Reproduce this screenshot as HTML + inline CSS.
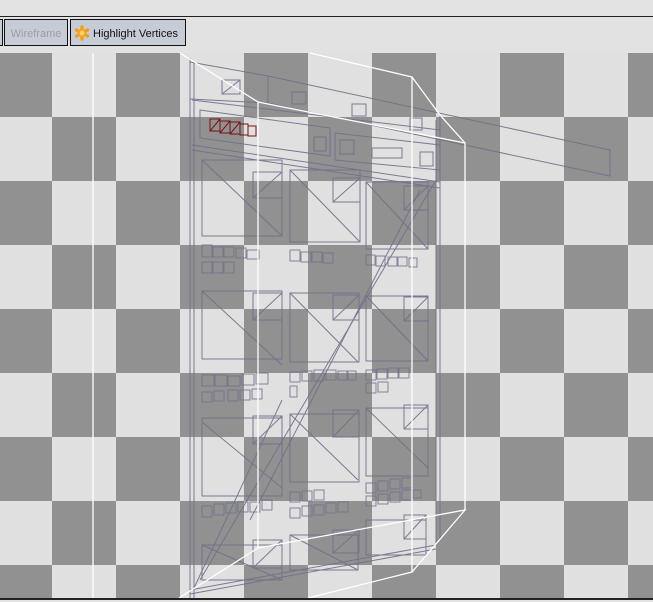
<!DOCTYPE html>
<html><head><meta charset="utf-8"><style>
html,body{margin:0;padding:0;width:653px;height:602px;overflow:hidden;background:#e2e2e2;font-family:"Liberation Sans",sans-serif}
.top{position:absolute;left:0;top:0;width:653px;height:16px;background:#e3e3e3;border-bottom:1px solid #222}
.btn{position:absolute;top:19px;height:27px;border:1px solid #111;background:#c6ccd6;font-size:11px;line-height:29px;box-sizing:border-box}
.view{position:absolute;left:0;top:53px;width:653px;height:545px;overflow:hidden;
background-color:#e0e0e0;
background-image:linear-gradient(45deg,#919191 25%,transparent 25%,transparent 75%,#919191 75%),linear-gradient(45deg,#919191 25%,transparent 25%,transparent 75%,#919191 75%);
background-size:128px 128px;background-position:-76px 0,-12px 64px}
.bot{position:absolute;left:0;top:598px;width:653px;height:4px;background:#e3e3e3;border-top:2px solid #222;box-sizing:border-box}
</style></head><body>
<div class="top"></div>
<div class="btn" style="left:-10px;width:13px;"></div>
<div class="btn" style="left:4px;width:64px;color:#9a9ea6;text-align:center;">Wireframe</div>
<div class="btn" style="left:70px;width:116px;color:#111;padding-left:22px;">Highlight Vertices
<svg style="position:absolute;left:3px;top:5px" width="16" height="16" viewBox="0 0 16 16"><g stroke="#f0a020" stroke-width="3.5" stroke-linecap="round"><line x1="8" y1="2" x2="8" y2="14"/><line x1="2.5" y1="5" x2="13.5" y2="11"/><line x1="2.5" y1="11" x2="13.5" y2="5"/></g><circle cx="8" cy="8" r="2.5" fill="#ffd060"/></svg></div>
<div class="view"></div>
<svg style="position:absolute;left:0;top:0" width="653" height="602" viewBox="0 0 653 602">
<g fill="none" stroke="#70708a" stroke-width="1" opacity="0.9">
<polyline points="190,58 190,598"/><polyline points="194,62 194,598"/>
<polyline points="440,115 440,540"/><polyline points="436,120 436,545"/>
<polygon points="190,62 268,76 268,103 190,99"/>
<polygon points="268,76 610,150 610,176 268,103"/>
<polygon points="200,110 330,128 330,156 200,138"/>
<polygon points="335,133 440,145 440,170 335,160"/>
<line x1="192" y1="145" x2="440" y2="182"/><line x1="192" y1="150" x2="440" y2="188"/>
<rect x="222" y="80" width="18" height="14"/><line x1="222" y1="94" x2="240" y2="80"/>
<rect x="292" y="92" width="14" height="12"/><rect x="352" y="104" width="14" height="12"/><rect x="410" y="118" width="12" height="12"/>
<line x1="192" y1="100" x2="440" y2="130"/>
<rect x="314" y="137" width="12" height="14"/><rect x="340" y="140" width="14" height="14"/><rect x="372" y="148" width="30" height="10"/><rect x="420" y="152" width="13" height="14"/>
<rect x="202" y="160" width="80" height="76"/><line x1="202" y1="160" x2="282" y2="236"/><rect x="253" y="172" width="29" height="26"/><line x1="253" y1="198" x2="282" y2="172"/>
<rect x="290" y="170" width="70" height="72"/><line x1="290" y1="170" x2="360" y2="242"/><rect x="333" y="178" width="27" height="24"/><line x1="333" y1="202" x2="360" y2="178"/>
<rect x="366" y="182" width="62" height="67"/><line x1="366" y1="182" x2="428" y2="249"/><rect x="404" y="186" width="24" height="24"/><line x1="404" y1="210" x2="428" y2="186"/>
<rect x="202" y="291" width="80" height="68"/><line x1="202" y1="291" x2="282" y2="365"/><rect x="253" y="293" width="29" height="27"/><line x1="253" y1="320" x2="282" y2="293"/>
<rect x="290" y="293" width="69" height="69"/><line x1="290" y1="293" x2="358" y2="362"/><rect x="333" y="295" width="26" height="25"/><line x1="333" y1="320" x2="359" y2="295"/>
<rect x="366" y="296" width="62" height="65"/><line x1="366" y1="296" x2="428" y2="361"/><rect x="404" y="297" width="24" height="24"/><line x1="404" y1="321" x2="428" y2="297"/>
<rect x="202" y="418" width="80" height="78"/><line x1="202" y1="422" x2="282" y2="488"/><rect x="253" y="416" width="29" height="28"/><line x1="253" y1="444" x2="282" y2="416"/>
<rect x="290" y="414" width="69" height="68"/><line x1="290" y1="414" x2="358" y2="480"/><rect x="333" y="410" width="26" height="27"/><line x1="333" y1="437" x2="359" y2="410"/>
<rect x="366" y="408" width="62" height="68"/><line x1="366" y1="408" x2="428" y2="468"/><rect x="404" y="405" width="24" height="24"/><line x1="404" y1="429" x2="428" y2="405"/>
<rect x="202" y="545" width="80" height="35"/><line x1="202" y1="545" x2="282" y2="580"/><rect x="253" y="540" width="29" height="28"/><line x1="253" y1="568" x2="282" y2="540"/>
<rect x="290" y="535" width="68" height="35"/><line x1="290" y1="535" x2="358" y2="570"/><rect x="333" y="530" width="26" height="23"/><line x1="333" y1="553" x2="359" y2="530"/>
<rect x="366" y="520" width="60" height="35"/><rect x="404" y="515" width="22" height="24"/><line x1="404" y1="539" x2="426" y2="515"/>
<line x1="190" y1="590" x2="436" y2="545"/><line x1="190" y1="594" x2="436" y2="549"/>
<line x1="194" y1="588" x2="282" y2="400"/><line x1="200" y1="580" x2="436" y2="180"/><line x1="250" y1="520" x2="420" y2="190"/>
<g stroke-width="0.9">
<rect x="202" y="245" width="10" height="12"/><rect x="213" y="247" width="10" height="10"/><rect x="224" y="247" width="10" height="10"/><rect x="236" y="248" width="10" height="10"/><rect x="247" y="250" width="12" height="9"/>
<rect x="202" y="262" width="10" height="11"/><rect x="213" y="262" width="10" height="11"/><rect x="224" y="262" width="10" height="11"/>
<rect x="290" y="250" width="10" height="11"/><rect x="301" y="252" width="10" height="10"/><rect x="312" y="252" width="10" height="10"/><rect x="323" y="253" width="10" height="10"/>
<rect x="366" y="255" width="9" height="10"/><rect x="376" y="256" width="9" height="10"/><rect x="388" y="257" width="9" height="9"/><rect x="398" y="257" width="9" height="9"/><rect x="409" y="258" width="8" height="9"/>
<rect x="202" y="375" width="12" height="11"/><rect x="215" y="375" width="12" height="11"/><rect x="228" y="376" width="12" height="10"/><rect x="242" y="374" width="12" height="11"/><rect x="256" y="373" width="12" height="11"/>
<rect x="202" y="392" width="10" height="10"/><rect x="214" y="391" width="10" height="10"/><rect x="228" y="390" width="10" height="11"/><rect x="240" y="390" width="10" height="10"/><rect x="252" y="389" width="10" height="10"/>
<rect x="290" y="372" width="10" height="10"/><rect x="302" y="371" width="10" height="10"/><rect x="314" y="370" width="10" height="11"/><rect x="326" y="370" width="10" height="10"/><rect x="338" y="371" width="9" height="9"/><rect x="348" y="371" width="8" height="9"/>
<rect x="290" y="386" width="7" height="11"/>
<rect x="366" y="370" width="10" height="10"/><rect x="377" y="369" width="10" height="10"/><rect x="388" y="368" width="10" height="10"/><rect x="399" y="368" width="10" height="10"/>
<rect x="366" y="383" width="10" height="10"/><rect x="378" y="382" width="10" height="10"/>
<rect x="202" y="506" width="10" height="11"/><rect x="214" y="504" width="10" height="11"/><rect x="226" y="503" width="10" height="10"/><rect x="238" y="502" width="10" height="10"/><rect x="250" y="502" width="10" height="10"/><rect x="262" y="500" width="10" height="10"/>
<rect x="290" y="492" width="10" height="10"/><rect x="302" y="491" width="10" height="10"/><rect x="314" y="490" width="10" height="10"/>
<rect x="290" y="508" width="10" height="10"/><rect x="302" y="506" width="10" height="10"/><rect x="314" y="505" width="10" height="10"/><rect x="326" y="503" width="10" height="10"/><rect x="338" y="502" width="10" height="10"/>
<rect x="366" y="483" width="10" height="10"/><rect x="378" y="481" width="10" height="10"/><rect x="390" y="479" width="10" height="10"/><rect x="402" y="478" width="10" height="10"/>
<rect x="366" y="496" width="10" height="10"/><rect x="378" y="494" width="10" height="10"/><rect x="390" y="492" width="10" height="10"/><rect x="402" y="490" width="10" height="10"/><rect x="413" y="490" width="8" height="8"/>
</g>
</g>
<g fill="none" stroke="#7a1010" stroke-width="1"><rect x="210" y="119" width="10" height="12"/><rect x="220" y="121" width="10" height="12"/><rect x="230" y="122" width="10" height="12"/><rect x="240" y="124" width="8" height="11"/><rect x="248" y="126" width="8" height="10"/><line x1="210" y1="131" x2="220" y2="119"/><line x1="220" y1="133" x2="230" y2="121"/><line x1="230" y1="134" x2="240" y2="122"/></g>
<g fill="none" stroke="#ffffff" stroke-width="1.3">
<line x1="93" y1="53" x2="93" y2="598"/>
<polyline points="180,53 258,102 258,548"/>
<polyline points="258,102 465,143"/>
<polyline points="310,53 412,77 412,572"/>
<polyline points="412,77 440,115 465,143 465,510"/>
<polyline points="179,598 258,548 465,510 412,572 308,598"/>
</g>
</svg>
<div class="bot"></div>
</body></html>
